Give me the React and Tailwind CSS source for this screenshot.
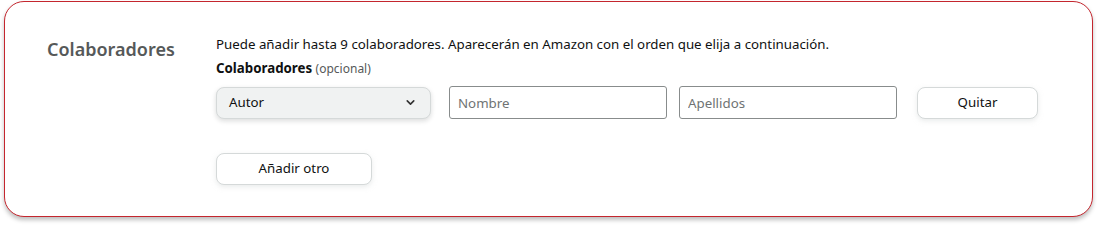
import { ChevronDown } from 'lucide-react'

export default function App() {
  return (
    <div className="w-[1097px] h-[226px] bg-white pt-px pl-1 pr-[4px]" style={{ fontFamily: '"Noto Sans", Arial, sans-serif' }}>
      <div className="h-[216px] rounded-[20px] border border-[#c4262e] bg-white shadow-[0_3px_4px_rgba(0,0,0,0.25)] flex pl-[42px] pt-[30px]">
        <div className="w-[169px] shrink-0">
          <h2 className="text-[18px] font-semibold text-[#565959] leading-[30px] mt-[2px]">Colaboradores</h2>
        </div>
        <div className="flex flex-col text-[#0f1111]">
          <p className="text-[13.3px] leading-[20px] mt-[2px]">
            Puede añadir hasta 9 colaboradores. Aparecerán en Amazon con el orden que elija a continuación.
          </p>
          <div className="text-[13.3px] leading-[20px] mt-[4px]">
            <span className="font-bold">Colaboradores</span>{' '}
            <span className="text-[12px] text-[#565959]">(opcional)</span>
          </div>
          <div className="flex items-center mt-[7px]">
            <button className="w-[215px] h-[32px] rounded-[8px] border border-[#d5d9d9] bg-[#f0f2f2] shadow-[0_2px_5px_rgba(15,17,17,0.15)] flex items-center justify-between pl-[12px] pr-[13px] text-[13.3px]">
              <span>Autor</span>
              <ChevronDown size={13} strokeWidth={3} className="text-[#333]" />
            </button>
            <input
              placeholder="Nombre"
              className="ml-[18px] w-[218px] h-[33px] rounded-[3px] border border-[#888c8c] px-[8px] text-[13.3px] placeholder:text-[#6f7373] outline-none"
            />
            <input
              placeholder="Apellidos"
              className="ml-[12px] w-[218px] h-[33px] rounded-[3px] border border-[#888c8c] px-[8px] text-[13.3px] placeholder:text-[#6f7373] outline-none"
            />
            <button className="ml-[20px] w-[121px] h-[32px] rounded-[8px] border border-[#d5d9d9] bg-white shadow-[0_2px_5px_rgba(213,217,217,0.5)] text-[13.3px]">
              Quitar
            </button>
          </div>
          <button className="mt-[34px] w-[156px] h-[32px] rounded-[8px] border border-[#d5d9d9] bg-white shadow-[0_2px_5px_rgba(213,217,217,0.5)] text-[13.3px]">
            Añadir otro
          </button>
        </div>
      </div>
    </div>
  )
}
